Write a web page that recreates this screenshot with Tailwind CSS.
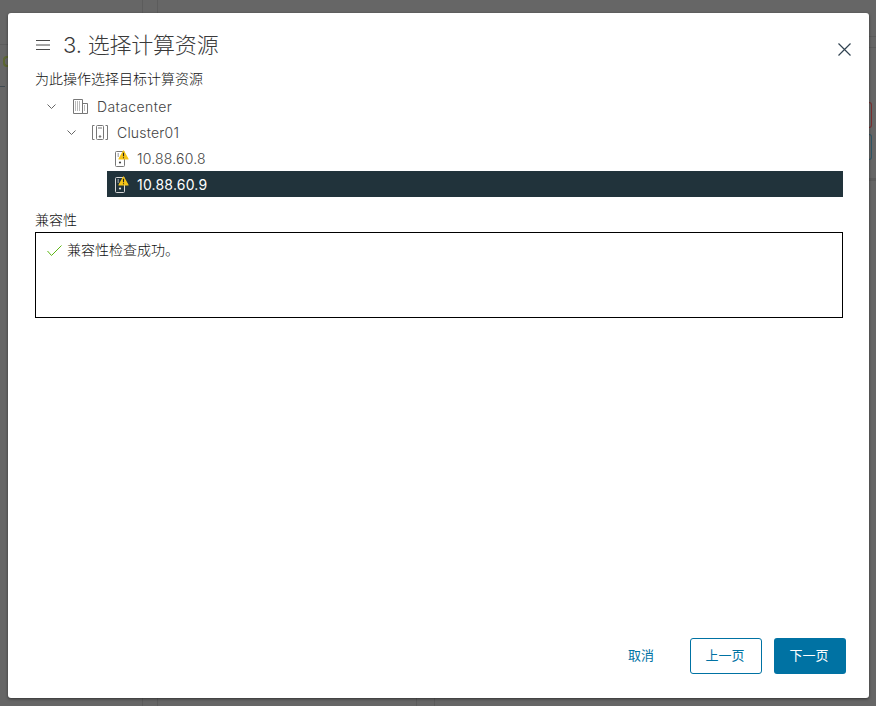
<!DOCTYPE html>
<html lang="zh">
<head>
  <meta charset="UTF-8" />
  <title>3. 选择计算资源</title>
  <script src="https://cdn.jsdelivr.net/npm/@tailwindcss/browser@4"></script>
</head>
<body class="relative h-[706px] w-[876px] overflow-hidden bg-[#666666] font-['Inter','Noto_Sans_CJK_SC',sans-serif] text-[#333333]">
  <!-- page behind the overlay -->
  <div class="absolute left-[142px] top-0 h-full w-[16px] border-x border-[#5c5c5c]"></div>
  <div class="absolute left-[416px] top-[698px] h-[8px] w-[19px] border-x border-[#5c5c5c]"></div>
  <div class="absolute left-0 top-[44px] h-px w-[8px] bg-[#5c5c5c]"></div>
  <div class="absolute right-0 top-[36px] h-px w-[7px] bg-[#5c5c5c]"></div>
  <div class="absolute right-0 top-[47px] h-px w-[7px] bg-[#5c5c5c]"></div>
  <div class="absolute right-0 top-[178px] h-[3px] w-[7px] bg-[#5c5c5c]"></div>
  <div class="absolute left-[3px] top-[56px] h-[11px] w-[5px] rounded-l-sm border-2 border-r-0 border-[#5c6632]"></div>
  <div class="absolute left-0 top-[86px] h-px w-[5px] bg-[#3f4a52]"></div>
  <div class="absolute right-[4px] top-[102px] h-[26px] w-[3px] rounded-r-sm border border-l-0 border-[#7a2f2f]"></div>
  <div class="absolute right-[4px] top-[134px] h-[26px] w-[3px] rounded-r-sm border border-l-0 border-[#2f5666]"></div>

  <!-- dialog -->
  <div class="absolute left-[8px] top-[13px] flex h-[685px] w-[861px] flex-col rounded-[3px] bg-white pl-[27px] pr-[26px] shadow-[0_1px_3px_rgba(0,0,0,0.5)]">
    <div class="flex h-[47px] shrink-0 items-end justify-between">
      <div class="flex items-center">
        <svg class="ml-px mr-[13px] h-[12px] w-[14px]" viewBox="0 0 14 12" fill="none" stroke="#4a4a4a" stroke-width="1"><path d="M0 1.5h14M0 6h14M0 10.5h14"/></svg>
        <h1 class="text-[22px] font-light leading-[30px] tracking-[-0.2px] text-[#3a3a3a]">3. 选择计算资源</h1>
      </div>
      <svg class="mb-[4px] mr-[-8px] h-[13px] w-[13px]" viewBox="0 0 13 13" fill="none" stroke="#314351" stroke-width="1.2"><path d="M.5.5l12 12M12.5.5l-12 12"/></svg>
    </div>

    <p class="mt-[10px] text-[14px] font-light leading-[18px] text-[#111111]">为此操作选择目标计算资源</p>

    <!-- tree -->
    <div class="mt-[5px] text-[14px] font-light tracking-[0.2px] text-[#444444]">
      <div class="flex h-[26px] items-center pl-[12px]">
        <svg class="h-[7px] w-[9px]" viewBox="0 0 9 7" fill="none" stroke="#666666"><path d="M.5 1.5l4 4 4-4"/></svg>
        <svg class="ml-[17px] h-[15px] w-[15px]" viewBox="0 0 15 15" fill="none" stroke="#777777"><path d="M.5 14.5V.5h9v14zM9.500 4.500h5v10h-5z"/><path stroke-dasharray="1 1" d="M2 3h6M2 5h6M2 7h6M2 9h6M2 11h6M11 7h2M11 9h2M11 11h2"/></svg>
        <span class="ml-[9px] tracking-[0.4px]">Datacenter</span>
      </div>
      <div class="flex h-[26px] items-center pl-[32px]">
        <svg class="h-[7px] w-[9px]" viewBox="0 0 9 7" fill="none" stroke="#666666"><path d="M.5 1.5l4 4 4-4"/></svg>
        <svg class="ml-[16px] h-[15px] w-[16px]" viewBox="0 0 16 15" fill="none" stroke="#777777"><path d="M2.500.5h-2v14h2M13.500.5h2v14h-2"/><rect x="4.500" y=".5" width="7" height="14" rx="1"/><path d="M6 3h4"/><circle cx="8" cy="11.500" r=".8" fill="#555555"/></svg>
        <span class="ml-[9px]">Cluster01</span>
      </div>
      <div class="flex h-[26px] items-center pl-[80px]">
        <svg class="h-[17px] w-[15px]" viewBox="0 0 15 17" fill="none"><rect x=".5" y="1.5" width="9" height="15" rx="1" stroke="#777777"/><path d="M2.500 4h1.500M2.500 6h1.500" stroke="#777777"/><circle cx="5" cy="12.500" r="1.100" fill="#444444"/><path d="M8.500 1l4.500 8H4z" fill="#f5c518" stroke="#f5c518" stroke-width="1.200" stroke-linejoin="round"/><path d="M8.500 2.800v3.400M8.500 7.200v1.100" stroke="#222222" stroke-width="1.100"/></svg>
        <span class="ml-[7px]">10.88.60.8</span>
      </div>
      <div class="ml-[72px] flex h-[26px] items-center bg-[#21333b] pl-[8px] font-normal text-white">
        <svg class="h-[17px] w-[15px]" viewBox="0 0 15 17" fill="none"><rect x=".5" y="1.5" width="9" height="15" rx="1" stroke="#d8d8d8"/><path d="M2.500 4h1.500M2.500 6h1.500" stroke="#d8d8d8"/><circle cx="5" cy="12.500" r="1.100" fill="#e5e5e5"/><path d="M8.500 1l4.500 8H4z" fill="#f5c518" stroke="#f5c518" stroke-width="1.200" stroke-linejoin="round"/><path d="M8.500 2.800v3.400M8.500 7.200v1.100" stroke="#222222" stroke-width="1.100"/></svg>
        <span class="ml-[7px]">10.88.60.9</span>
      </div>
    </div>

    <!-- compatibility -->
    <p class="mt-[14px] text-[14px] font-light leading-[18px] text-[#111111]">兼容性</p>
    <div class="mt-[3px] flex h-[86px] items-start border border-black pl-[11px] pt-[8px]">
      <svg class="mt-[4px] h-[11px] w-[15px]" viewBox="0 0 15 11" fill="none" stroke="#5eb715"><path d="M.5 6l4 4.500 10-10"/></svg>
      <span class="ml-[5px] text-[14px] font-light leading-[18px] text-[#111111]">兼容性检查成功。</span>
    </div>

    <!-- footer -->
    <div class="mb-[24px] mr-[-3px] mt-auto flex items-center justify-end text-[13px]">
      <button class="mr-[36px] text-[#0072a3]">取消</button>
      <button class="mr-[12px] h-[36px] w-[72px] rounded-[3px] border border-[#0072a3] pr-[2px] text-[#0072a3]">上一页</button>
      <button class="h-[36px] w-[72px] rounded-[3px] bg-[#0072a3] pr-[2px] text-white">下一页</button>
    </div>
  </div>
</body>
</html>
